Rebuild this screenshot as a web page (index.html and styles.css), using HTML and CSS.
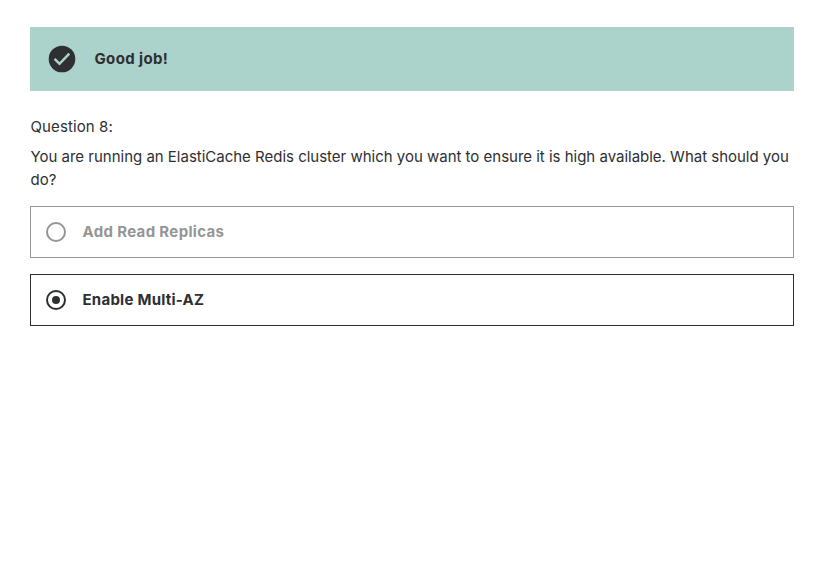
FILE: index.html
```
<!DOCTYPE html>
<html lang="en">
<head>
<meta charset="utf-8">
<title>Question 8</title>
<link rel="stylesheet" href="styles.css">
</head>
<body>
<main class="quiz">
  <div class="alert">
    <svg class="alert-icon" viewBox="0 0 30 30"><circle cx="15" cy="15" r="13.3" fill="#2d2f31"/><path d="M7.6 14.9l4.9 4.9 9.8-10.2" fill="none" stroke="#acd2cc" stroke-width="2.5"/></svg>
    <span class="alert-text">Good job!</span>
  </div>
  <p class="number">Question 8:</p>
  <p class="prompt">You are running an ElastiCache Redis cluster which you want to ensure it is high available. What should you <br>do?</p>
  <div class="option disabled">
    <svg class="radio" viewBox="0 0 20 20"><circle cx="10" cy="10" r="9" fill="none" stroke="currentColor" stroke-width="2"/></svg>
    <span class="option-a">Add Read Replicas</span>
  </div>
  <div class="option">
    <svg class="radio" viewBox="0 0 20 20"><circle cx="10" cy="10" r="9" fill="none" stroke="currentColor" stroke-width="2"/><circle cx="10" cy="10" r="4" fill="currentColor"/></svg>
    <span class="option-b">Enable Multi-AZ</span>
  </div>
</main>
</body>
</html>
```
FILE: styles.css
```
body { margin: 0; background: #fff; color: #2d2f31; font: 400 15px/23px Inter, sans-serif; }
p { margin: 0; }
.quiz { padding: 27px 42px 0 30px; }
.alert { display: flex; align-items: center; height: 64px; padding-left: 17px; background: #acd2cc; box-sizing: border-box; gap: 17.5px; font-weight: 700; letter-spacing: 0.36px; }
.alert-icon { width: 30px; height: 30px; }
.alert-text, .option-a, .option-b { padding-bottom: 2px; }
.number { margin-top: 24px; padding-left: 0.5px; letter-spacing: 0.1px; }
.prompt { margin-top: 7px; padding-left: 0.5px; letter-spacing: -0.01px; white-space: nowrap; }
.option { display: flex; align-items: center; gap: 16.5px; height: 52px; margin-top: 15px; padding-left: 15px; border: 1px solid; box-sizing: border-box; font-weight: 700; letter-spacing: 0.34px; }
.option + .option { margin-top: 16px; }
.option-b { letter-spacing: 0.25px; }
.disabled { color: #959595; }
.radio { width: 20px; height: 20px; }
```
